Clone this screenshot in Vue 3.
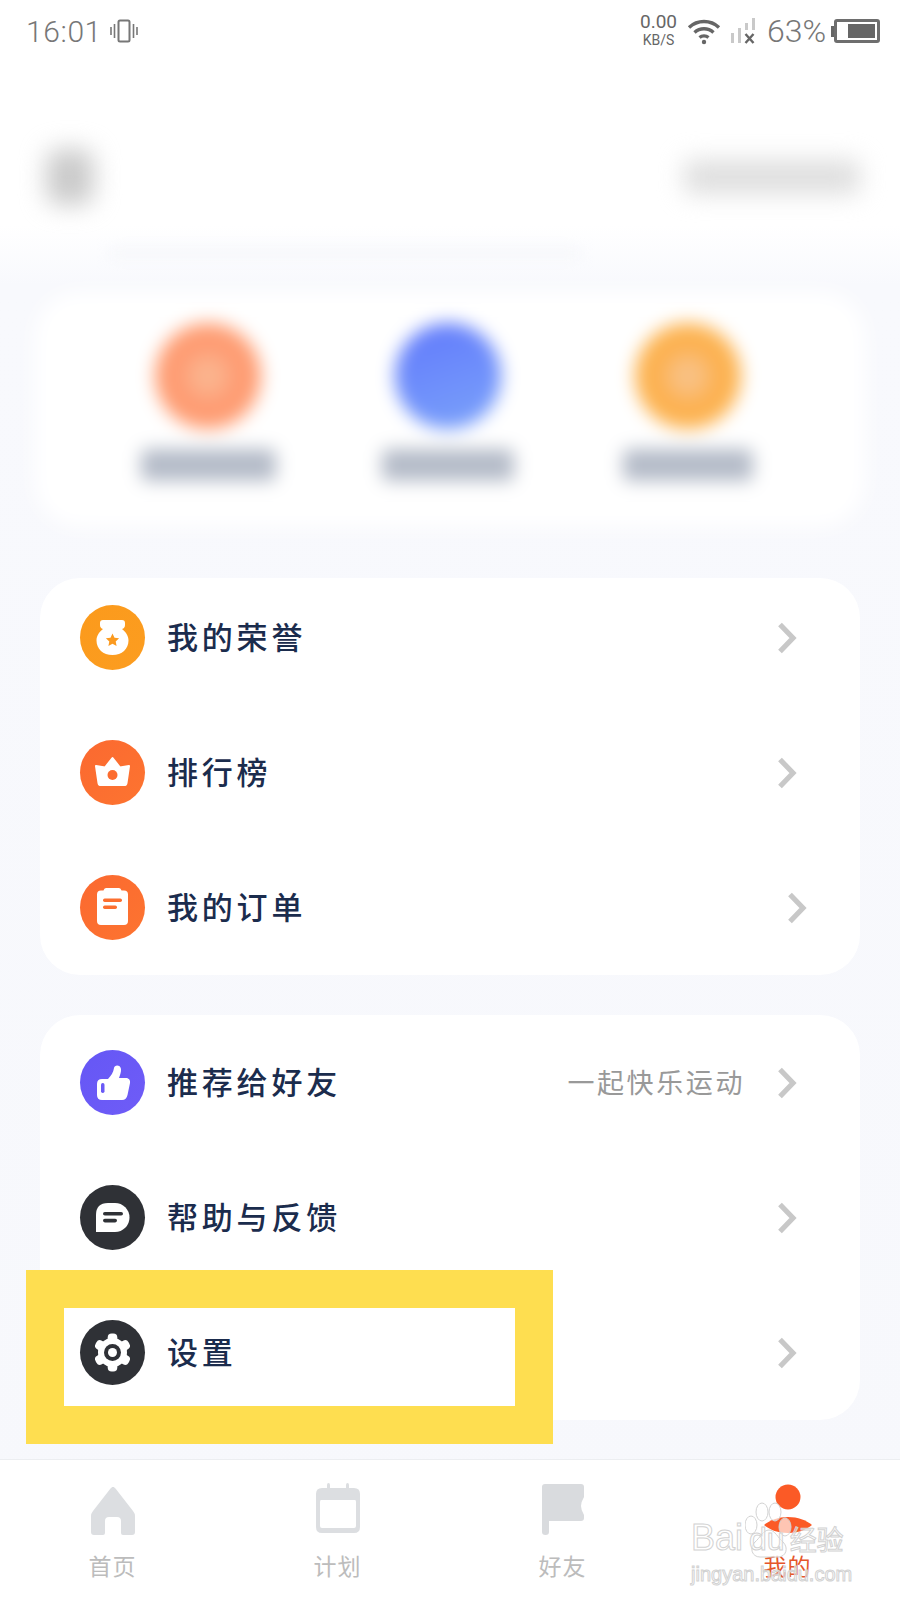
<script setup>
const quick = [
  { cls: 'q-orange', bar: 135 },
  { cls: 'q-blue', bar: 132 },
  { cls: 'q-amber', bar: 130 },
]
const groupA = [
  { key: 'honor', label: '我的荣誉', tone: 'amber' },
  { key: 'rank', label: '排行榜', tone: 'orange' },
  { key: 'order', label: '我的订单', tone: 'orange', shift: true },
]
const groupB = [
  { key: 'like', label: '推荐给好友', tone: 'violet', note: '一起快乐运动' },
  { key: 'help', label: '帮助与反馈', tone: 'dark' },
  { key: 'gear', label: '设置', tone: 'dark' },
]
const groups = [
  { id: 'a', rows: groupA },
  { id: 'b', rows: groupB },
]
const tabs = [
  { key: 'home', label: '首页' },
  { key: 'plan', label: '计划' },
  { key: 'flag', label: '好友' },
  { key: 'me', label: '我的', active: true },
]
</script>

<template>
  <div class="page">
    <header class="status">
      <div class="status-left">
        <span class="clock">16:01</span>
        <svg class="vib" viewBox="0 0 28 24" width="28" height="24" fill="none" stroke="#777" stroke-width="1.6">
          <rect x="8.5" y="1.5" width="11" height="21" rx="1.5" stroke-width="2" />
          <path d="M4.5 5v14M1 8v8M23.500 5v14M27 8v8" />
        </svg>
      </div>
      <div class="status-right">
        <div class="speed"><span>0.00</span><span class="unit">KB/S</span></div>
        <svg class="wifi" viewBox="0 0 34 28" width="34" height="28" fill="none" stroke="#666" stroke-width="3.4">
          <path d="M2 10.500C10.500 2.500 23.500 2.500 32 10.500" />
          <path d="M7.500 15.500C13 10.500 21 10.500 26.500 15.500" />
          <path d="M12.500 20.500C15 18.500 19 18.500 21.500 20.500" />
          <circle cx="17" cy="25" r="2.200" fill="#666" stroke="none" />
        </svg>
        <svg class="signal" viewBox="0 0 30 28" width="30" height="28">
          <rect x="1" y="16" width="3" height="10" fill="#c9c9c9" />
          <rect x="8" y="11" width="3" height="15" fill="#c9c9c9" />
          <rect x="15" y="6" width="3" height="7" fill="#c9c9c9" />
          <rect x="22" y="1" width="3" height="12" fill="#c9c9c9" />
          <path d="M15.500 17l8 9M23.500 17l-8 9" stroke="#666" stroke-width="2.400" />
        </svg>
        <span class="pct">63%</span>
        <div class="battery"><i class="cap"></i><div class="cell"><i class="fill"></i></div></div>
      </div>
    </header>

    <section class="hero">
      <div class="hero-row">
        <i class="blob-avatar"></i>
        <i class="blob-title"></i>
      </div>
      <div class="hero-fade"></div>
      <div class="quick">
        <div v-for="q in quick" :key="q.cls" class="quick-item">
          <i class="quick-dot" :class="q.cls"></i>
          <i class="quick-bar" :style="{ width: q.bar + 'px' }"></i>
        </div>
      </div>
    </section>

    <main class="lists">
      <section v-for="g in groups" :key="g.id" class="card" :class="'card-' + g.id">
        <div v-for="r in g.rows" :key="r.key" class="row">
          <span class="ico" :class="'tone-' + r.tone">
            <svg v-if="r.key === 'honor'" viewBox="0 0 65 65" width="65" height="65">
              <path d="M20 18q0-3 3-3h19q3 0 3 3v2q0 3-3 4c4 3 6.500 7 6.500 11.500C48.500 44 42 50 32.500 50S16.500 44 16.500 35.500C16.500 31 19 27 23 24q-3-1-3-4z" fill="#fff" />
              <path d="M32.500 28.500l2 4.200 4.600.6-3.400 3.200.9 4.600-4.100-2.300-4.100 2.300.9-4.600-3.400-3.200 4.600-.6z" fill="#fb9a1f" />
            </svg>
            <svg v-else-if="r.key === 'rank'" viewBox="0 0 65 65" width="65" height="65">
              <path d="M16 26l9 1.500L32.500 18 40 27.500l9-1.500-2.500 17q-.3 2-2.500 2H21q-2.200 0-2.500-2z" fill="#fff" stroke="#fff" stroke-width="2" stroke-linejoin="round" />
              <circle cx="32.500" cy="35" r="5" fill="#fc6c2f" />
            </svg>
            <svg v-else-if="r.key === 'order'" viewBox="0 0 65 65" width="65" height="65">
              <path d="M26 13h13q2 0 2.500 2.500H44q4 0 4 4V46q0 4-4 4H21q-4 0-4-4V19.500q0-4 4-4h2.500Q24 13 26 13z" fill="#fff" />
              <rect x="23" y="23.500" width="19" height="3.400" rx="1.700" fill="#fc6f30" />
              <rect x="23" y="30.500" width="14" height="3.400" rx="1.700" fill="#fc6f30" />
            </svg>
            <svg v-else-if="r.key === 'like'" viewBox="0 0 65 65" width="65" height="65">
              <path d="M22 29h6c3-3 5.500-7 6-11 .4-3.500 6.500-3.500 7 1 .3 3-1 6-2 9h7c3 0 4.500 2.500 4 5l-2.500 12c-.6 3-2.500 5-5.500 5H22q-5 0-5-5V34q0-5 5-5z" fill="#fff" />
              <rect x="21" y="33" width="3.500" height="10" rx="1.700" fill="#6a5af6" />
            </svg>
            <svg v-else-if="r.key === 'help'" viewBox="0 0 65 65" width="65" height="65">
              <path d="M28 18h7a14.500 14.500 0 0 1 0 29H16V30q0-12 12-12z" fill="#fff" />
              <rect x="23" y="27" width="20" height="3.600" rx="1.800" fill="#2f3136" />
              <rect x="23" y="33.800" width="14" height="3.600" rx="1.800" fill="#2f3136" />
            </svg>
            <svg v-else viewBox="0 0 65 65" width="65" height="65">
              <g fill="#fff">
                <circle cx="32.500" cy="32.500" r="14.500" />
                <rect x="27.700" y="13.500" width="9.600" height="38" rx="4" />
                <rect x="27.700" y="13.500" width="9.600" height="38" rx="4" transform="rotate(60 32.500 32.500)" />
                <rect x="27.700" y="13.500" width="9.600" height="38" rx="4" transform="rotate(120 32.500 32.500)" />
              </g>
              <circle cx="32.500" cy="32.500" r="8.500" fill="#2f3136" />
              <circle cx="32.500" cy="32.500" r="4.500" fill="#fff" />
            </svg>
          </span>
          <span class="label">{{ r.label }}</span>
          <span v-if="r.note" class="note">{{ r.note }}</span>
          <svg class="chev" :class="{ 'chev-shift': r.shift }" viewBox="0 0 20 32" width="20" height="32" fill="none" stroke="#c8c8c8" stroke-width="5.200">
            <path d="M3 2.500L16 16 3 29.500" />
          </svg>
        </div>
      </section>
    </main>

    <nav class="tabbar">
      <div v-for="t in tabs" :key="t.key" class="tab" :class="{ active: t.active }">
        <span class="tab-ico">
          <svg v-if="t.key === 'home'" viewBox="0 -3 46 52" width="46" height="52">
            <path d="M23 1c1 0 1.800.6 2.500 1.500L43 25q2 2.500 2 5v16q0 3-3 3h-9q-2 0-2-2V35q0-4-4-4h-8q-4 0-4 4v12q0 2-2 2H4q-3 0-3-3V30q0-2.500 2-5L20.500 2.500C21.200 1.600 22 1 23 1z" fill="#dcdee1" />
          </svg>
          <svg v-else-if="t.key === 'plan'" viewBox="0 0 46 52" width="46" height="52">
            <path d="M7 5h5V2q0-2 1.500-2T15 2v3h16V2q0-2 1.500-2T34 2v3h5q6 0 6 6v33q0 6-6 6H7q-6 0-6-6V11q0-6 6-6zm-1 12q-1 0-1 2v24q0 2 2 2h32q2 0 2-2V19q0-2-1-2z" fill="#dcdee1" fill-rule="evenodd" />
          </svg>
          <svg v-else-if="t.key === 'flag'" viewBox="0 0 44 52" width="44" height="52">
            <path d="M4 1h36q3 0 3 3v10q-3 5-3 9t3 9v3q0 3-3 3H8v11q0 3-3.500 3T1 49V4q0-3 3-3z" fill="#d9dbde" />
          </svg>
          <svg v-else viewBox="0 0 52 52" width="52" height="52">
            <circle cx="26" cy="14" r="12.500" fill="#fb5a26" />
            <path d="M2 42c6-5 14-8 24-8s18 3 24 8c-6 5-14 8-24 8s-18-3-24-8z" fill="#fb5a26" />
          </svg>
        </span>
        <span class="tab-label">{{ t.label }}</span>
      </div>
      <div class="mark">
        <svg class="paw" viewBox="0 0 50 62" width="50" height="62" fill="rgba(255,255,255,.65)" stroke="#d2d2d2" stroke-width="1">
          <ellipse cx="6" cy="25" rx="6" ry="9" />
          <ellipse cx="17" cy="12" rx="6" ry="9" />
          <ellipse cx="30" cy="12" rx="6" ry="9" />
          <ellipse cx="40" cy="27" rx="6" ry="9" />
          <path d="M24 30c-6 0-9 8-14 12-6 6-3 15 5 15h18c8 0 11-9 5-15-5-4-8-12-14-12z" />
        </svg>
        <div class="mark-top"><span class="mark-en">Bai</span><span class="mark-du">du</span><span class="mark-cn">经验</span></div>
        <div class="mark-url">jingyan.baidu.com</div>
      </div>
    </nav>

    <div class="highlight"></div>
  </div>
</template>

<style scoped>
.page {
  position: relative;
  width: 900px;
  height: 1600px;
  overflow: hidden;
  background: linear-gradient(#fff 0, #fff 225px, #f8f9fd 285px, #f7f8fc 100%);
  font-family: "Noto Sans CJK SC", "Noto Sans", sans-serif;
  display: flex;
  flex-direction: column;
}

/* status bar */
.status {
  height: 62px;
  padding: 0 20px 0 26px;
  display: flex;
  align-items: center;
  justify-content: space-between;
  box-sizing: border-box;
  color: #777;
  font-family: Roboto, "Liberation Sans", sans-serif;
  font-weight: 300;
}
.status-left, .status-right { display: flex; align-items: center; }
.clock { font-size: 30px; letter-spacing: .6px; width: 84px; }
.vib { display: block; }
.speed {
  display: flex;
  flex-direction: column;
  align-items: center;
  font-size: 19px;
  line-height: 18px;
  font-weight: 400;
  color: #666;
  margin-right: 10px;
}
.unit { font-size: 14px; line-height: 18px; }
.wifi { margin-right: 9px; }
.signal { margin-right: 7px; }
.pct { font-size: 32px; color: #777; width: 64px; }
.battery { display: flex; align-items: center; }
.cap { width: 3px; height: 11px; background: #666; }
.cell {
  width: 46px;
  height: 24px;
  box-sizing: border-box;
  border: 3px solid #6e6e6e;
  border-radius: 3px;
  padding: 2px 2px 2px 11px;
  background: #fff;
}
.fill { display: block; height: 100%; background: #666; }

/* blurred profile area */
.hero { height: 516px; display: flex; flex-direction: column; }
.hero-row {
  height: 120px;
  margin-top: 55px;
  padding: 0 40px 0 46px;
  display: flex;
  align-items: center;
  justify-content: space-between;
}
.blob-avatar {
  width: 48px;
  height: 56px;
  border-radius: 14px;
  background: #cbcbcb;
  filter: blur(12px);
}
.blob-title {
  width: 176px;
  height: 34px;
  border-radius: 8px;
  background: #dedede;
  filter: blur(12px);
}
.hero-fade {
  height: 8px;
  margin: 12px 320px 0 110px;
  background: #f5f6fa;
  filter: blur(7px);
}
.quick {
  margin: 40px 40px 0;
  height: 225px;
  border-radius: 40px;
  background: #fff;
  box-shadow: 0 0 14px 4px #fff;
  display: flex;
  padding: 26px 52px 0 48px;
  box-sizing: border-box;
  filter: blur(9px);
}
.quick-item {
  width: 240px;
  display: flex;
  flex-direction: column;
  align-items: center;
}
.quick-dot {
  width: 106px;
  height: 106px;
  border-radius: 50%;
  flex: none;
}
.q-orange { background: radial-gradient(circle, #fbb48e 0 12px, #fe9a72 30px, #ffa373 100%); }
.q-blue { background: linear-gradient(160deg, #6078fb, #7ba3fa); }
.q-amber { background: radial-gradient(circle, #f9c184 0 12px, #fcb050 30px, #fdb850 100%); }
.quick-bar {
  height: 32px;
  margin-top: 20px;
  border-radius: 6px;
  background: #b4bbc8;
}

/* list cards */
.lists { margin: 0 40px; display: flex; flex-direction: column; gap: 40px; }
.card {
  border-radius: 40px;
  background: #fff;
  padding: 35px 0;
  display: flex;
  flex-direction: column;
  gap: 70px;
}
.card-a { padding-top: 27px; }
.row { display: flex; align-items: center; height: 65px; padding: 0 63px 0 40px; }
.ico { width: 65px; height: 65px; border-radius: 50%; flex: none; margin-right: 22px; }
.ico svg { display: block; }
.tone-amber { background: linear-gradient(135deg, #fb9a1c, #fc9d20); }
.tone-orange { background: linear-gradient(135deg, #fb6930, #fd7430); }
.tone-violet { background: linear-gradient(135deg, #6557f5, #6f5cf7); }
.tone-dark { background: #2f3136; }
.label {
  font-size: 31px;
  letter-spacing: 3.800px;
  font-weight: 500;
  color: #1b2c4d;
  flex: 1;
  padding-bottom: 4px;
}
.note {
  font-size: 27px;
  letter-spacing: 2.600px;
  color: #999;
  margin-right: 32px;
  padding-bottom: 2px;
}
.chev { display: block; flex: none; }
.chev-shift { margin-right: -10px; }

/* tab bar */
.tabbar {
  position: absolute;
  left: 0;
  right: 0;
  bottom: 0;
  height: 141px;
  background: #fff;
  border-top: 1px solid #eceef1;
  box-sizing: border-box;
  display: flex;
}
.tab {
  width: 225px;
  display: flex;
  flex-direction: column;
  align-items: center;
}
.tab-ico { height: 52px; margin-top: 23px; display: block; }
.tab-ico svg { display: block; }
.tab-label {
  margin-top: 15px;
  font-size: 23px;
  line-height: 30px;
  letter-spacing: 1px;
  color: #bcbcbc;
}
.active .tab-label { color: #e5562a; }

/* watermark */
.mark {
  position: absolute;
  left: 691px;
  top: 60px;
  width: 165px;
  font-family: "Liberation Sans", sans-serif;
  color: rgba(255,255,255,.5);
  -webkit-text-stroke: 1px #d2d2d2;
}
.paw { position: absolute; left: 54px; top: -20px; }
.mark-top { position: relative; display: flex; align-items: baseline; font-size: 36px; line-height: 36px; }
.mark-du { margin-left: 6px; font-size: 32px; }
.mark-cn { font-size: 27px; font-family: "Noto Sans CJK SC", sans-serif; margin-left: 5px; }
.mark-url { position: relative; font-size: 20px; line-height: 22px; margin-top: 6px; }

/* annotation frame */
.highlight {
  position: absolute;
  left: 26px;
  top: 1270px;
  width: 527px;
  height: 174px;
  box-sizing: border-box;
  border: 38px solid #fede50;
  pointer-events: none;
}
</style>
